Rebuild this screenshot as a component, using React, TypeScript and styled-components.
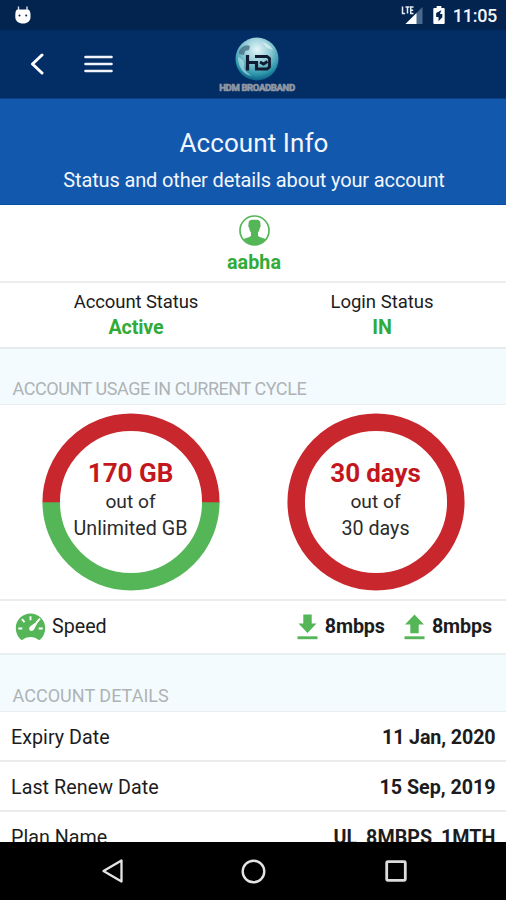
import React from "react";
import styled, { createGlobalStyle } from "styled-components";

const GREEN = "#55b658";
const RED = "#c8272d";

const GlobalStyle = createGlobalStyle`
  *, *::before, *::after { box-sizing: border-box; }
  html, body { margin: 0; padding: 0; background: #fff; }
  body { font-family: Roboto, "Liberation Sans", sans-serif; color: #1c1c1e; overflow: hidden; }
  svg { display: block; flex: none; }
`;

const Screen = styled.div`
  display: flex;
  flex-direction: column;
  width: 506px;
  height: 900px;
  overflow: hidden;
  background: #fff;
`;

const Label = styled.span<{ $track?: number; $size?: number }>`
  font-size: ${(p) => p.$size ?? 19.7}px;
  letter-spacing: ${(p) => p.$track ?? 0}px;
  line-height: 26px;
  white-space: nowrap;
`;

const Strong = styled(Label)`
  font-weight: 700;
`;

const Positive = styled(Strong)`
  color: #31ab38;
`;

const StatusBar = styled.header`
  display: flex;
  flex: none;
  align-items: center;
  justify-content: space-between;
  height: 30px;
  padding: 0 9px 0 14px;
  background: #02244f;
`;

const StatusIcons = styled.div`
  display: flex;
  align-items: center;
`;

const BatterySlot = styled.div`
  margin-left: 10px;
`;

const Clock = styled.span`
  margin-left: 8px;
  padding-top: 1px;
  color: #f4f6fb;
  font-size: 18px;
  font-weight: 500;
  letter-spacing: -0.3px;
`;

const AppBar = styled.nav`
  display: grid;
  flex: none;
  grid-template-columns: 1fr 80px 1fr;
  height: 69px;
  background: #022d65;
  border-bottom: 1px solid #0a3f86;
`;

const BarActions = styled.div`
  display: flex;
  align-items: center;
  gap: 40px;
  padding-left: 30px;
`;

const Brand = styled.div`
  display: flex;
  flex-direction: column;
  align-items: center;
  padding: 7px 0 0 8px;
`;

const BrandName = styled.span`
  margin-top: 1px;
  color: #8f97a3;
  font-size: 9.5px;
  font-weight: 700;
  line-height: 11px;
  letter-spacing: -0.35px;
  white-space: nowrap;
  -webkit-text-stroke: 0.7px #8f97a3;
`;

const Banner = styled.section`
  display: flex;
  flex: none;
  flex-direction: column;
  align-items: center;
  height: 106px;
  padding: 29px 0 0 2px;
  color: #f3f6fd;
  background: #1258ad;
  border-bottom: 1px solid #0650a8;
`;

const Title = styled.h1`
  margin: 0 0 9px;
  font-size: 26px;
  font-weight: 400;
  line-height: 30px;
  letter-spacing: 0.08px;
`;

const Subtitle = styled.p`
  margin: 0;
  font-size: 20px;
  line-height: 26px;
  letter-spacing: -0.137px;
  white-space: nowrap;
`;

const UserCard = styled.section`
  display: flex;
  flex: none;
  flex-direction: column;
  align-items: center;
  gap: 4px;
  height: 78px;
  padding: 10px 0 0 2px;
  border-bottom: 2px solid #ececec;
`;

const StatusGrid = styled.section`
  display: grid;
  flex: none;
  grid-template-columns: 246px 246px;
  height: 66px;
  padding: 6px 0 0 13px;
  border-bottom: 2px solid #e6eced;
`;

const StatusItem = styled.div`
  display: flex;
  flex-direction: column;
  align-items: center;
`;

const SectionTitle = styled.h2<{ $height: number; $track?: number }>`
  display: flex;
  flex: none;
  align-items: flex-end;
  height: ${(p) => p.$height}px;
  margin: 0;
  padding: 0 12.5px 3px;
  color: #aeb3b5;
  background: #f4fbfe;
  border-bottom: 1px solid #e9eef0;
  font-size: 18px;
  font-weight: 400;
  line-height: 24px;
  letter-spacing: ${(p) => p.$track ?? 0}px;
`;

const UsageGrid = styled.section`
  display: grid;
  flex: none;
  grid-template-columns: 245px 245px;
  height: 196px;
  padding: 8px 0 0 8px;
  border-bottom: 2px solid #ececec;
`;

const Gauge = styled.div`
  display: grid;
  justify-items: center;
  > * { grid-area: 1 / 1; }
`;

const GaugeText = styled.div`
  display: flex;
  flex-direction: column;
  align-items: center;
  padding-top: 44px;
  color: #2b2b2d;
`;

const GaugeLimit = styled(Label)`
  padding-top: 1px;
`;

const GaugeValue = styled.span<{ $track: number }>`
  color: #c3171d;
  font-size: 26px;
  font-weight: 700;
  line-height: 32px;
  letter-spacing: ${(p) => p.$track}px;
`;

const SpeedRow = styled.section`
  display: flex;
  flex: none;
  align-items: center;
  height: 54px;
  padding: 0 14px 0 15px;
  border-bottom: 2px solid #e9eeee;
`;

const SpeedName = styled.div`
  display: flex;
  flex: 1;
  align-items: center;
  gap: 6px;
`;

const Rate = styled.div`
  display: flex;
  align-items: center;
  gap: 7px;
  margin-left: 19px;
`;

const Details = styled.section`
  flex: 1;
  min-height: 0;
  overflow: hidden;
`;

const DetailRow = styled.div`
  display: flex;
  justify-content: space-between;
  height: 50px;
  padding: 13px 10.5px 0 11px;
  border-bottom: 2px solid #ebebeb;
`;

const NavBar = styled.footer`
  display: grid;
  flex: none;
  grid-template-columns: 1fr 60px 1fr;
  align-items: center;
  justify-items: center;
  height: 58px;
  background: #000;
`;

const NavBack = styled.div`
  justify-self: end;
  padding-right: 99px;
`;

const NavRecent = styled.div`
  justify-self: start;
  padding-left: 102px;
`;

const DroidHead = () => (
  <svg width="18" height="20" viewBox="0 0 17 20">
    <path d="M4 1.500v5M12.500 1.500v5" stroke="#d9dde8" strokeWidth="1.400" />
    <path d="M3.500 4.500h9.500c2 0 3 2 3 5.500v2c0 4-3 6.500-7.500 6.500S.8 16 .8 12v-2C.8 6.500 1.500 4.500 3.500 4.500z" fill="#fff" />
    <circle cx="5" cy="10.500" r="1" fill="#02244f" />
    <circle cx="11.700" cy="10.500" r="1" fill="#02244f" />
  </svg>
);

const Signal = () => (
  <svg width="22" height="20" viewBox="0 0 22 20">
    <path d="M21.500 2v17H4.500z" fill="#496a8d" />
    <path d="M15.500 8v11H4.500z" fill="#fff" />
    <path d="M1.500 1.500v7h2.600M4.500 2h4M6.500 2v6.500M12.500 2H9.700v6.500h2.800M9.700 5.200h2.500" fill="none" stroke="#e8ecf4" strokeWidth="1.500" />
  </svg>
);

const Battery = () => (
  <svg width="12" height="18" viewBox="0 0 12 19">
    <path d="M3.500 0h5v2H11c.6 0 1 .4 1 1v15c0 .6-.4 1-1 1H1c-.6 0-1-.4-1-1V3c0-.6.4-1 1-1h2.500z" fill="#fff" />
    <path d="M8.500 4.500 3 7.500v4h2.500V16L9.500 12V8.500H7z" fill="#02244f" />
  </svg>
);

const BackIcon = () => (
  <svg width="14" height="22" viewBox="0 0 14 22">
    <path d="M12 2 2.500 11 12 20" fill="none" stroke="#fff" strokeWidth="3" strokeLinecap="round" strokeLinejoin="round" />
  </svg>
);

const MenuIcon = () => (
  <svg width="29" height="20" viewBox="0 0 29 20">
    <path d="M1.500 3h26M1.500 10h26M1.500 17h26" stroke="#f2f4fb" strokeWidth="2.600" strokeLinecap="round" />
  </svg>
);

const Globe = () => (
  <svg width="44" height="44" viewBox="0 0 44 44">
    <defs>
      <radialGradient id="globe" cx="50%" cy="28%" r="72%">
        <stop offset="0" stopColor="#e4f6f8" />
        <stop offset="0.450" stopColor="#8cc9d5" />
        <stop offset="0.800" stopColor="#2c96aa" />
        <stop offset="1" stopColor="#0b5f86" />
      </radialGradient>
    </defs>
    <circle cx="22" cy="22" r="21.500" fill="url(#globe)" />
    <path d="M4 14c3-5 7-7 11-5l-1 4-4 1-1 4-5-1z" fill="#44697c" opacity="0.750" />
    <path d="M3 20c5 2 7 5 6 11 2 4 5 6 8 8C9 38 3 31 3 20z" fill="#c6ebef" opacity="0.550" />
    <path d="M27 5c5 1 9 4 11 8l-6-2z" fill="#fff" opacity="0.500" />
    <path d="M12.500 18v15.500M12.500 25.500H22M21.500 24v8" fill="none" stroke="#101b31" strokeWidth="3.200" />
    <path d="M20 19.500h12l2.500 2v8.500l-2.500 2H20M25 25l3.500 2 4-2.500" fill="none" stroke="#101b31" strokeWidth="2.800" />
  </svg>
);

const UserIcon = () => (
  <svg width="31" height="31" viewBox="0 0 31 31">
    <circle cx="15.500" cy="15.500" r="14.500" fill="#fff" stroke={GREEN} strokeWidth="1.700" />
    <path d="M12.500 4.800h6c2.200.3 3.200 2 2.900 4.600.6.800.3 2.600-.5 3.200-.4 2.400-1 4-1.900 5v3c1 2 5.500 2.200 7.700 3.900C23.500 28 20 30 15.500 30s-8-2-11-5.500c2.200-1.700 6.700-1.900 7.500-3.900v-3c-.9-1-1.500-2.600-1.900-5-.8-.6-1.100-2.400-.5-3.200-.3-2.600.7-4.300 2.900-4.600z" fill={GREEN} />
  </svg>
);

const Speedometer = () => (
  <svg width="31" height="28" viewBox="0 0 30 28">
    <path d="M15 .5C6.800.5.300 7 .300 15c0 4.500 1.700 8.500 4.700 11.300 1 .9 2 .8 2.900 0 4-3.200 10.200-3.200 14.200 0 .9.800 1.900.9 2.900 0 3-2.800 4.700-6.800 4.700-11.300C29.700 7 23.200.5 15 .5z" fill={GREEN} />
    <path d="M15 3.300v4M6.500 6.200 9 9.200M2.800 15.500h4M27.200 15.500h-4M21 9.500l3.500-3.800" stroke="#fff" strokeWidth="1.900" />
    <path d="M23.500 7 18.800 16c-1 2.200-3.800 2.600-4.800 1s.2-3.200 1.500-4.200z" fill="#fff" />
  </svg>
);

const Download = () => (
  <svg width="21" height="26" viewBox="0 0 21 26">
    <path d="M6.300.5h8.400v9h4.800l-9 9.500-9-9.500h4.800z" fill={GREEN} />
    <path d="M.5 22.300h20v2.900H.5z" fill={GREEN} />
  </svg>
);

const Upload = () => (
  <svg width="21" height="26" viewBox="0 0 21 26">
    <path d="M10.500.5 20 10.500h-5.300v8.700H6.300v-8.700H1z" fill={GREEN} />
    <path d="M.5 22.300h20v2.900H.5z" fill={GREEN} />
  </svg>
);

const Ring = ({ base }: { base: string }) => (
  <svg width="178" height="178" viewBox="0 0 178 178">
    <path d="M9.200 89a79.800 79.800 0 0 0 159.600 0" fill="none" stroke={base} strokeWidth="17.500" />
    <path d="M9.200 89.300V89a79.800 79.800 0 0 1 159.600 0v.3" fill="none" stroke={RED} strokeWidth="17.500" />
  </svg>
);

const details = [
  { name: "Expiry Date", nameTrack: 0.03, value: "11 Jan, 2020", valueTrack: -0.12 },
  { name: "Last Renew Date", nameTrack: 0.05, value: "15 Sep, 2019", valueTrack: -0.02 },
  { name: "Plan Name", nameTrack: 0, value: "UL_8MBPS_1MTH", valueTrack: 0.04 },
];

export default function App() {
  return (
    <Screen>
      <GlobalStyle />
      <StatusBar>
        <DroidHead />
        <StatusIcons>
          <Signal />
          <BatterySlot>
            <Battery />
          </BatterySlot>
          <Clock>11:05</Clock>
        </StatusIcons>
      </StatusBar>
      <AppBar>
        <BarActions>
          <BackIcon />
          <MenuIcon />
        </BarActions>
        <Brand>
          <Globe />
          <BrandName>HDM BROADBAND</BrandName>
        </Brand>
      </AppBar>
      <Banner>
        <Title>Account Info</Title>
        <Subtitle>Status and other details about your account</Subtitle>
      </Banner>
      <UserCard>
        <UserIcon />
        <Positive $track={0.1}>aabha</Positive>
      </UserCard>
      <StatusGrid>
        <StatusItem>
          <Label $size={18.5} $track={-0.1}>Account Status</Label>
          <Positive $track={-0.1}>Active</Positive>
        </StatusItem>
        <StatusItem>
          <Label $size={18.5}>Login Status</Label>
          <Positive>IN</Positive>
        </StatusItem>
      </StatusGrid>
      <SectionTitle $height={56} $track={-0.44}>ACCOUNT USAGE IN CURRENT CYCLE</SectionTitle>
      <UsageGrid>
        <Gauge>
          <Ring base={GREEN} />
          <GaugeText>
            <GaugeValue $track={0}>170 GB</GaugeValue>
            <Label $size={19.2}>out of</Label>
            <GaugeLimit>Unlimited GB</GaugeLimit>
          </GaugeText>
        </Gauge>
        <Gauge>
          <Ring base={RED} />
          <GaugeText>
            <GaugeValue $track={-0.12}>30 days</GaugeValue>
            <Label $size={19.2}>out of</Label>
            <GaugeLimit>30 days</GaugeLimit>
          </GaugeText>
        </Gauge>
      </UsageGrid>
      <SpeedRow>
        <SpeedName>
          <Speedometer />
          <Label>Speed</Label>
        </SpeedName>
        <Rate>
          <Download />
          <Strong $track={-0.1}>8mbps</Strong>
        </Rate>
        <Rate>
          <Upload />
          <Strong $track={-0.1}>8mbps</Strong>
        </Rate>
      </SpeedRow>
      <SectionTitle $height={57} $track={0.03}>ACCOUNT DETAILS</SectionTitle>
      <Details>
        {details.map((d) => (
          <DetailRow key={d.name}>
            <Label $track={d.nameTrack}>{d.name}</Label>
            <Strong $track={d.valueTrack}>{d.value}</Strong>
          </DetailRow>
        ))}
      </Details>
      <NavBar>
        <NavBack>
          <svg width="23" height="26" viewBox="0 0 23 26">
            <path d="M20.500 2.500v21L2.500 13z" fill="none" stroke="#e4e4e4" strokeWidth="2.300" strokeLinejoin="round" />
          </svg>
        </NavBack>
        <svg width="25" height="25" viewBox="0 0 25 25">
          <circle cx="12.500" cy="12.500" r="10.800" fill="none" stroke="#e4e4e4" strokeWidth="2.400" />
        </svg>
        <NavRecent>
          <svg width="22" height="22" viewBox="0 0 22 22">
            <rect x="1.700" y="1.700" width="18.600" height="18.600" rx="1" fill="none" stroke="#dcdcdc" strokeWidth="2.800" />
          </svg>
        </NavRecent>
      </NavBar>
    </Screen>
  );
}
